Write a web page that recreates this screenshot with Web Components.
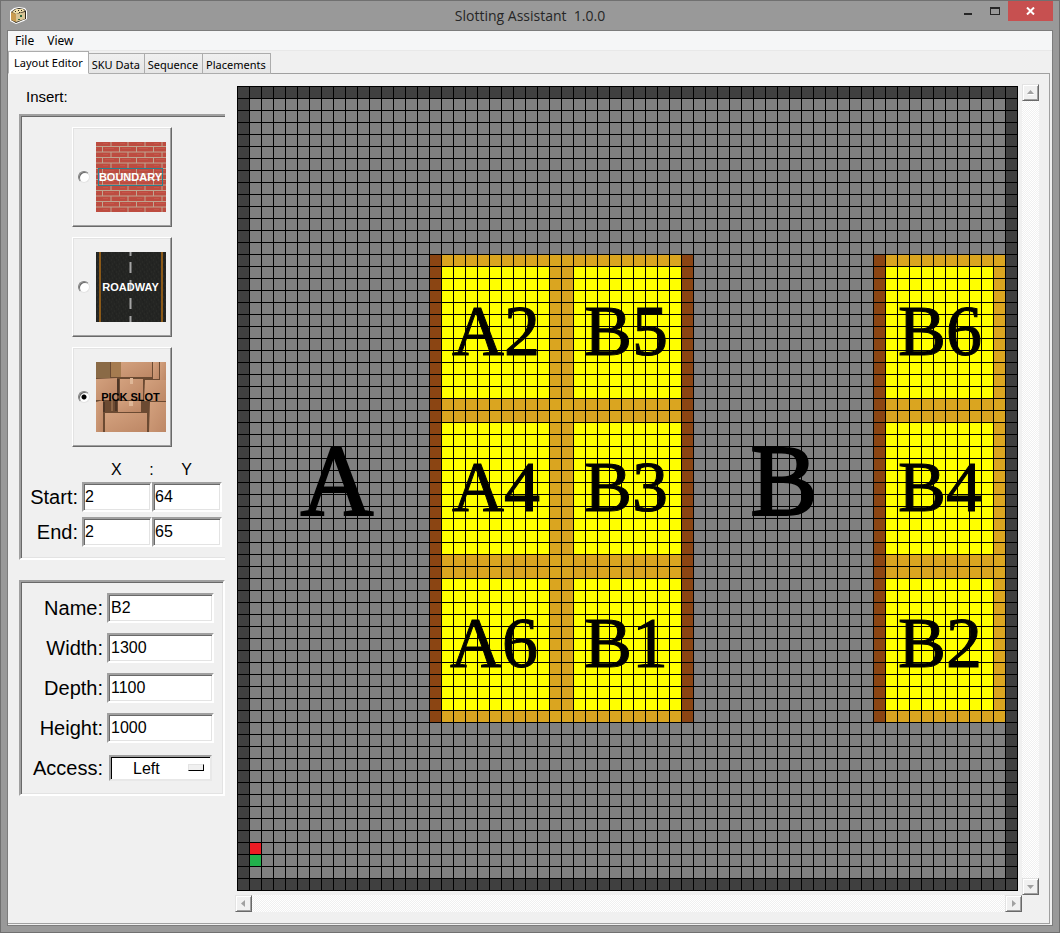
<!DOCTYPE html>
<html lang="en">
<head>
<meta charset="utf-8">
<title>Slotting Assistant</title>
<style>
  body { margin: 0; font-family: "Liberation Sans", Arial, sans-serif; color: #000; }
</style>
</head>
<body>
<app-window>
  <title-bar slot="title">Slotting Assistant&nbsp; 1.0.0</title-bar>
  <menu-bar></menu-bar>
  <tab-bar></tab-bar>
  <editor-panel>
    <div slot="side">
      <insert-palette></insert-palette>
      <slot-form></slot-form>
    </div>
    <scroll-area><warehouse-map></warehouse-map></scroll-area>
  </editor-panel>
</app-window>

<script>
const define = (name, html, setup) => {
  const template = document.createElement('template');
  template.innerHTML = html;
  customElements.define(name, class extends HTMLElement {
    constructor() {
      super();
      this.attachShadow({ mode: 'open' }).append(template.content.cloneNode(true));
      if (setup) setup(this.shadowRoot);
    }
  });
};

// Shared bevel look of the sunken frames and text boxes
const sunken = `
  border: 2px solid; border-color: #a0a0a0 #fff #fff #a0a0a0;
  box-shadow: inset 1px 1px #696969, inset -1px -1px #e3e3e3;`;

define('app-window', `
<style>
  :host { display: flex; flex-direction: column; box-sizing: border-box; min-height: 100vh;
    padding: 0 7px 7px; background: #999; border-top: 1px solid #707070;
    box-shadow: inset 1px 0 #707070, inset -1px -1px #707070; }
  .client { flex: 1; display: flex; flex-direction: column; background: #f0f0f0; border: 1px solid #7c7c7c; }
</style>
<slot name="title"></slot>
<div class="client"><slot></slot></div>`);

define('title-bar', `
<style>
  :host { display: grid; grid-template-columns: 1fr auto 1fr; height: 29px; color: #262626;
    font: 14px/30px "Open Sans", "Noto Sans", sans-serif; }
  .icon { margin: 6px 0 0 3px; display: block; }
  .controls { display: flex; justify-content: flex-end; align-items: flex-start; }
  button { width: 27px; height: 20px; padding: 0; border: 0; background: none; display: grid; place-items: center; }
  .close { width: 45px; background: #c75050; }
  svg { display: block; }
</style>
<svg class="icon" width="17" height="17" viewBox="0 0 17 17">
  <path d="M0 4 4 1 9 0 15 1 17 4V12L14 14 6 17 0 14Z" fill="#fff"/>
  <path d="M1 5 5 2 9 1 14 2 16 4V12L13 13 6 16 1 13Z" fill="#2b261c"/>
  <path d="M1 5 6 7V15L1 13Z" fill="#c99b50"/>
  <path d="M6 7 15 5V12L6 15Z" fill="#d8c596"/>
  <path d="M2 5 6 2 13 2 15 4 6 7Z" fill="#f1dfaa"/>
  <path d="M5 4.500H6M8 3.500H9M11 3.500H12M9 5.500H10" stroke="#2b261c"/>
  <path d="M10 8H12V10H10ZM8 12H10V13H8Z" fill="#28653a"/>
</svg>
<span><slot></slot></span>
<div class="controls">
  <button aria-label="Minimize"><svg width="8" height="10"><path d="M0 7H8V9H0Z" fill="#262626"/></svg></button>
  <button aria-label="Maximize"><svg width="10" height="8"><path d="M0 0H10V8H0ZM1 2V7H9V2Z" fill="#262626" fill-rule="evenodd"/></svg></button>
  <button class="close" aria-label="Close"><svg width="9" height="8"><path d="M1 .5 8 7.500M8 .5 1 7.500" stroke="#fff" stroke-width="2"/></svg></button>
</div>`);

define('menu-bar', `
<style>
  :host { display: flex; height: 19px; background: #f5f6f7; border-bottom: 1px solid #e8e8e8; }
  button { border: 0; padding: 0 7px; background: none; color: #000; font: 12px/20px "Noto Sans", sans-serif; }
  button + button { padding-left: 6px; }
</style>
<button>File</button><button>View</button>`);

define('tab-bar', `
<style>
  :host { display: flex; align-items: flex-end; height: 23px; margin-bottom: -1px; position: relative; }
  button { box-sizing: border-box; height: 21px; padding: 1px 4px 0 3px; border: 1px solid #acacac; border-left: 0;
    background: linear-gradient(#f0f0f0, #e5e5e5); color: #000; font: 11px/20px "Noto Sans", sans-serif; }
  .active { height: 23px; padding: 0 5px; border-left: 1px solid #acacac; border-bottom-color: #fff; background: #fff; }
</style>
<button class="active">Layout Editor</button><button>SKU Data</button><button>Sequence</button><button>Placements</button>`);

define('editor-panel', `
<style>
  :host { flex: 1; display: flex; margin-right: 2px; margin-bottom: 1px; padding: 10px 10px 11px 0;
    border: 1px solid #a0a0a0; border-left: 0; }
  .side { flex: none; width: 227px; }
  .main { flex: 1; min-width: 0; display: flex; }
</style>
<div class="side"><slot name="side"></slot></div>
<div class="main"><slot></slot></div>`);

define('insert-palette', `
<style>
  :host { display: block; }
  h2 { margin: 0; padding-left: 18px; font-weight: 400; font-size: 15px; line-height: 26px; height: 30px; }
  .frame { box-sizing: border-box; height: 446px; margin: 0 10px 0 11px; padding: 11px 3px 0 0; ${sunken}
    border-right: 0; box-shadow: inset 1px 1px #696969, inset 0 -1px #e3e3e3; }
  .card { box-sizing: border-box; display: flex; align-items: center; gap: 6px; width: 100px; height: 100px;
    margin: 0 auto 10px; padding-left: 5px; border: 1px solid; border-color: #fff #696969 #696969 #fff;
    box-shadow: inset -1px -1px #a0a0a0, inset 1px 1px #e3e3e3; }
  input { appearance: none; box-sizing: border-box; flex: none; width: 12px; height: 12px; margin: 0; border-radius: 50%;
    background: #fff; border: 1px solid; border-color: #808080 #e3e3e3 #e3e3e3 #808080; box-shadow: inset 1px 1px #696969; }
  input:checked { background: radial-gradient(circle, #000 2px, #fff 3px); }
  .tile { display: grid; width: 70px; height: 70px; place-items: center; color: #fff;
    font: bold 11px/16px "Liberation Sans", sans-serif; }
  .tile > * { grid-area: 1 / 1; }
  .tile span { box-sizing: border-box; border: 1px solid transparent; white-space: nowrap; position: relative; }
  .tile .focus { border-color: #2a8290; }
  .dark { color: #000; }
  .head { display: flex; justify-content: space-between; padding: 0 30px 0 90px; font-size: 16px; line-height: 25px; }
  .coords { display: grid; grid-template-columns: 61px 70px 70px; row-gap: 5px; align-items: center; }
  .coords label { font-size: 20px; line-height: 26px; text-align: right; padding-right: 4px; }
  .coords input { appearance: auto; border-radius: 0; width: 70px; height: 30px; padding: 0 1px; background: #fff;
    font: 16px "Liberation Sans", sans-serif; color: #000; outline: 0; ${sunken} }
</style>
<h2>Insert:</h2>
<div class="frame">
  <label class="card"><input type="radio" name="kind">
    <div class="tile">
      <svg width="70" height="70">
        <defs>
          <pattern id="brick" width="17" height="11" patternUnits="userSpaceOnUse" x="6" y="4">
            <rect width="17" height="11" fill="#bd4c40"/>
            <path d="M0 .5H17M0 6H17M.5 0V6M9 6V11" stroke="#bfa590" stroke-width="1"/>
            <path d="M3 2.500H12M1 8.500H6" stroke="#c5564a" stroke-width="1"/>
          </pattern>
        </defs>
        <rect width="70" height="70" fill="url(#brick)"/>
      </svg>
      <span class="focus">BOUNDARY</span>
    </div>
  </label>
  <label class="card"><input type="radio" name="kind">
    <div class="tile">
      <svg width="70" height="70">
        <defs>
          <pattern id="tar" width="7" height="7" patternUnits="userSpaceOnUse">
            <rect width="7" height="7" fill="#242523"/>
            <path d="M1 1H2M4 3H5M2 5H3M6 6H7" stroke="#2e2f2b"/><path d="M5 1H6M0 4H1M4 6H5" stroke="#1d1f1c"/>
          </pattern>
        </defs>
        <rect width="70" height="70" fill="url(#tar)"/>
        <path d="M4 0V70M66 0V70" stroke="#8c5a18" stroke-width="2"/>
        <path d="M34.500 0V4M34.500 10V21M34.500 28V39M34.500 46V57M34.500 64V70" stroke="#a5a5a5" stroke-width="2"/>
      </svg>
      <span>ROADWAY</span>
    </div>
  </label>
  <label class="card"><input type="radio" name="kind" checked>
    <div class="tile dark">
      <svg width="70" height="70">
        <defs>
          <linearGradient id="carton" x2="1" y2="1"><stop stop-color="#d3a17e"/><stop offset="1" stop-color="#bd8765"/></linearGradient>
        </defs>
        <rect width="70" height="70" fill="#6b4a32"/>
        <path d="M0 0H14V16H0Z" fill="#8a6a46"/>
        <path d="M15 0H25V15H15Z" fill="#a57b50"/>
        <g fill="url(#carton)">
          <path d="M25 0H56V15H25Z"/><path d="M57 0H63V17H57Z"/><path d="M64 0H70V18H64Z"/>
          <path d="M0 17 21 16V38H0Z"/><path d="M24 17H47V38H24Z"/><path d="M49 18H70V39H48Z"/>
          <path d="M0 40 7 38V70H0Z"/><path d="M22 39H45V50H22Z"/><path d="M54 40H70V70H53Z"/><path d="M9 51H51V70H9Z"/>
        </g>
        <path d="M34 16H37V22H34ZM33 39H37V44H33Z" fill="#dfb797"/>
        <path d="M15 38H17V49H15Z" fill="#8f6848"/>
        <path d="M22 17V34M8 40V50M20 39V49" stroke="#33231a" fill="none"/>
      </svg>
      <span>PICK SLOT</span>
    </div>
  </label>
  <div class="head"><span>X</span><span>:</span><span>Y</span></div>
  <div class="coords">
    <label for="sx">Start:</label><input id="sx" value="2"><input aria-label="Start Y" value="64">
    <label for="ex">End:</label><input id="ex" value="2"><input aria-label="End Y" value="65">
  </div>
</div>`);

define('slot-form', `
<style>
  :host { display: block; margin: 20px 10px 0 11px; }
  form { display: grid; grid-template-columns: 85px 107px; row-gap: 10px; align-items: center; padding: 11px 8px 11px 1px; ${sunken} }
  label { font-size: 20px; line-height: 30px; text-align: right; padding-right: 4px; }
  input, select { box-sizing: border-box; margin: 0; border-radius: 0; outline: 0; background: #fff; color: #000;
    font: 16px "Liberation Sans", sans-serif; ${sunken} }
  input { height: 30px; width: 107px; padding: 0 2px; }
  .menu { position: relative; display: block; width: 103px; margin-left: 2px; }
  select { appearance: none; display: block; width: 103px; height: 26px; padding: 0 0 0 22px;
    border-color: #a0a0a0 #e8e8e8 #e8e8e8 #a0a0a0; box-shadow: inset 1px 1px #000; }
  .menu i { position: absolute; right: 8px; top: 9px; width: 14px; height: 5px; background: #f0f0f0;
    border: 1px solid; border-color: #e3e3e3 #000 #000 #e3e3e3; pointer-events: none; }
</style>
<form>
  <label for="name">Name:</label><input id="name" value="B2">
  <label for="width">Width:</label><input id="width" value="1300">
  <label for="depth">Depth:</label><input id="depth" value="1100">
  <label for="height">Height:</label><input id="height" value="1000">
  <label for="access">Access:</label>
  <div class="menu"><select id="access"><option>Left</option><option>Right</option></select><i></i></div>
</form>`);

define('scroll-area', `
<style>
  :host { flex: 1; min-width: 0; display: grid; grid-template: 1fr 17px / minmax(0, 1fr) 17px; }
  .view { overflow: hidden; padding: 2px; }
  .track { display: flex; justify-content: space-between; background: repeating-conic-gradient(#f0f0f0 0 25%, #fff 0 50%) 0 0 / 2px 2px; }
  .vertical { flex-direction: column; }
  button { box-sizing: border-box; width: 17px; height: 17px; padding: 0; display: grid; place-items: center; background: #f0f0f0;
    border: 1px solid; border-color: #e3e3e3 #696969 #696969 #e3e3e3; box-shadow: inset 1px 1px #fff, inset -1px -1px #a0a0a0; }
  svg { display: block; fill: #a0a0a0; }
</style>
<div class="view"><slot></slot></div>
<div class="track vertical">
  <button aria-label="Scroll up"><svg width="9" height="9"><path d="M1 6 4.500 2 8 6Z"/><path d="M2 6H8V7H2Z" fill="#fff"/></svg></button>
  <button aria-label="Scroll down"><svg width="9" height="9"><path d="M1 3H8L4.500 7Z"/></svg></button>
</div>
<div class="track">
  <button aria-label="Scroll left"><svg width="9" height="9"><path d="M6 1V8L2 4.500Z"/></svg></button>
  <button aria-label="Scroll right"><svg width="9" height="9"><path d="M3 1V8L7 4.500Z"/></svg></button>
</div>`);

define('warehouse-map', `
<style>
  :host { display: block; }
  svg { display: block; }
  text { font-family: "Liberation Serif", "Times New Roman", serif; font-size: 72px; text-anchor: middle;
    stroke: #000; stroke-width: 1px; }
  .aisle { font-size: 101px; stroke-width: 2px; }
</style>
<svg width="781" height="805" viewBox="0 0 781 805">
  <defs>
    <pattern id="cell" width="12" height="12" patternUnits="userSpaceOnUse"><path d="M0 0H12V1H1V12H0Z"/></pattern>
  </defs>
  <g id="cells" shape-rendering="crispEdges"></g>
  <rect width="781" height="805" fill="url(#cell)" shape-rendering="crispEdges"/>
  <g id="names"></g>
</svg>`, root => {
  const CELL = 12;
  const paint = (x, y, w, h, fill) =>
    `<rect x="${x * CELL}" y="${y * CELL}" width="${w * CELL}" height="${h * CELL}" fill="${fill}"/>`;
  let cells = paint(0, 0, 65, 67, '#404040') + paint(1, 1, 63, 65, '#808080');
  // Pick slots: the rack frame, the access side, then the storage area
  for (const [left, access] of [[16, 16], [27, 37], [53, 53]]) {
    cells += paint(left, 14, 11, 39, '#daa520') + paint(access, 14, 1, 39, '#8b4513');
    for (let row = 0; row < 3; row++) cells += paint(left + 1, 15 + row * 13, 9, 11, '#ffff00');
  }
  cells += paint(1, 63, 1, 1, '#ed1c24') + paint(1, 64, 1, 1, '#22b14c');
  root.getElementById('cells').innerHTML = cells;

  const names = [
    ['A2', 259, 269], ['B5', 389, 269], ['B6', 703, 269],
    ['A4', 259, 425], ['B3', 389, 425], ['B4', 703, 425],
    ['A6', 257, 581], ['B1', 389, 581], ['B2', 703, 581],
  ].map(([name, x, y]) => `<text x="${x}" y="${y}">${name}</text>`).join('');
  root.getElementById('names').innerHTML = names +
    '<text class="aisle" x="100" y="429">A</text><text class="aisle" x="547" y="429">B</text>';
});
</script>
</body>
</html>
